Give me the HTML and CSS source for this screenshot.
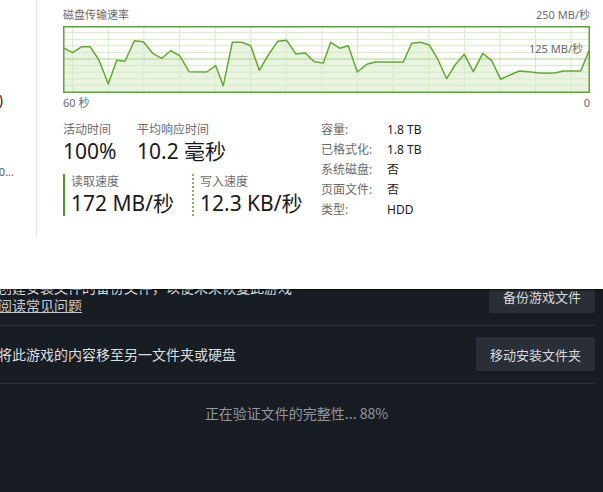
FILE: index.html
```html
<!DOCTYPE html>
<html lang="zh-CN">
<head>
  <meta charset="UTF-8" />
  <title>磁盘 - 验证文件</title>
  <link rel="stylesheet" href="styles.css">
</head>
<body>
  <!-- Task Manager: disk panel -->
  <div class="taskmgr">
    <div class="side">
      <div class="side-frag frag-name">磁盘 1 (D:)</div>
      <div class="side-frag frag-model">ST2000DM00...</div>
    </div>

    <div class="perf">
      <div class="chart-head">
        <span>磁盘传输速率</span>
        <span>250 MB/秒</span>
      </div>
      <div class="chart">
        <svg width="527" height="67" viewBox="0 0 527 67">
          <polygon fill="#e8f4df" points="0,21.7 9.7,26.7 18.7,20.7 27,20.7 36,34 45.3,58 53.7,34.3 62,35.3 71.3,14.7 80.3,15.7 89.7,27.3 98.7,32.3 107.7,24.7 117,30 126,45.7 143.7,46 152.7,39.7 160.3,59.7 169.3,16.3 178.7,16.3 187.7,19.7 196.3,44.3 205.3,29 214.7,15.3 223.7,14.3 233,28 242.3,27 251.3,35.7 260.3,37 267.7,16.3 277,22.3 285.3,19.7 294.3,46 303.7,38.3 312.7,36 340.3,36 348.7,17.3 357.7,16.3 366.3,19 374.3,32.3 383.7,52.7 392,39 401.3,28.3 410.3,45.7 419.7,27.3 428.7,34.7 437.7,53.3 447,49 456.3,45 465.3,45.7 474.3,46.7 483.7,47.3 493,46.7 500.3,45 517.7,45 526.3,24 527,67 0,67"/>
          <g stroke="#d5eac6" stroke-width="1">
            <line x1="0" y1="6.6" x2="527" y2="6.6"/>
            <line x1="0" y1="13.2" x2="527" y2="13.2"/>
            <line x1="0" y1="19.8" x2="527" y2="19.8"/>
            <line x1="0" y1="26.4" x2="527" y2="26.4"/>
            <line x1="0" y1="39.6" x2="527" y2="39.6"/>
            <line x1="0" y1="46.2" x2="527" y2="46.2"/>
            <line x1="0" y1="52.8" x2="527" y2="52.8"/>
            <line x1="0" y1="59.4" x2="527" y2="59.4"/>
            <line x1="9.7" y1="0" x2="9.7" y2="67"/>
            <line x1="45.3" y1="0" x2="45.3" y2="67"/>
            <line x1="80.9" y1="0" x2="80.9" y2="67"/>
            <line x1="116.5" y1="0" x2="116.5" y2="67"/>
            <line x1="152.1" y1="0" x2="152.1" y2="67"/>
            <line x1="187.7" y1="0" x2="187.7" y2="67"/>
            <line x1="223.3" y1="0" x2="223.3" y2="67"/>
            <line x1="258.9" y1="0" x2="258.9" y2="67"/>
            <line x1="294.5" y1="0" x2="294.5" y2="67"/>
            <line x1="330.1" y1="0" x2="330.1" y2="67"/>
            <line x1="365.7" y1="0" x2="365.7" y2="67"/>
            <line x1="401.3" y1="0" x2="401.3" y2="67"/>
            <line x1="436.9" y1="0" x2="436.9" y2="67"/>
            <line x1="472.5" y1="0" x2="472.5" y2="67"/>
            <line x1="508.1" y1="0" x2="508.1" y2="67"/>
          </g>
          <line x1="0" y1="33" x2="527" y2="33" stroke="#a9d38b" stroke-width="1"/>
          <polyline fill="none" stroke="#64a832" stroke-width="1.5" stroke-linejoin="round" points="0,21.7 9.7,26.7 18.7,20.7 27,20.7 36,34 45.3,58 53.7,34.3 62,35.3 71.3,14.7 80.3,15.7 89.7,27.3 98.7,32.3 107.7,24.7 117,30 126,45.7 143.7,46 152.7,39.7 160.3,59.7 169.3,16.3 178.7,16.3 187.7,19.7 196.3,44.3 205.3,29 214.7,15.3 223.7,14.3 233,28 242.3,27 251.3,35.7 260.3,37 267.7,16.3 277,22.3 285.3,19.7 294.3,46 303.7,38.3 312.7,36 340.3,36 348.7,17.3 357.7,16.3 366.3,19 374.3,32.3 383.7,52.7 392,39 401.3,28.3 410.3,45.7 419.7,27.3 428.7,34.7 437.7,53.3 447,49 456.3,45 465.3,45.7 474.3,46.7 483.7,47.3 493,46.7 500.3,45 517.7,45 526.3,24"/>
          <rect x="0.75" y="0.75" width="525.5" height="65.5" fill="none" stroke="#5da42a" stroke-width="1.5"/>
        </svg>
        <span class="chart-mid">125 MB/秒</span>
      </div>
      <div class="chart-foot">
        <span>60 秒</span>
        <span>0</span>
      </div>

      <div class="stats">
        <div class="stats-left">
          <div class="stat-row">
            <div class="stat">
              <div class="stat-label">活动时间</div>
              <div class="stat-value">100%</div>
            </div>
            <div class="stat">
              <div class="stat-label">平均响应时间</div>
              <div class="stat-value">10.2 毫秒</div>
            </div>
          </div>
          <div class="stat-row speeds">
            <div class="stat speed read">
              <div class="stat-label">读取速度</div>
              <div class="stat-value">172 MB/秒</div>
            </div>
            <div class="stat speed write">
              <div class="stat-label">写入速度</div>
              <div class="stat-value">12.3 KB/秒</div>
            </div>
          </div>
        </div>

        <dl class="info">
          <dt>容量:</dt><dd>1.8 TB</dd>
          <dt>已格式化:</dt><dd>1.8 TB</dd>
          <dt>系统磁盘:</dt><dd>否</dd>
          <dt>页面文件:</dt><dd>否</dd>
          <dt>类型:</dt><dd>HDD</dd>
        </dl>
      </div>
    </div>
  </div>

  <!-- Steam: game properties, installed files -->
  <div class="steam">
    <div class="steam-row backup-row">
      <div class="row-text">
        创建安装文件的备份文件，以便未来恢复此游戏<br>
        <a href="#">阅读常见问题</a>
      </div>
      <button class="btn">备份游戏文件</button>
    </div>
    <div class="steam-row move-row">
      <div class="row-text">将此游戏的内容移至另一文件夹或硬盘</div>
      <button class="btn">移动安装文件夹</button>
    </div>
    <div class="verify">正在验证文件的完整性... 88%</div>
  </div>
</body>
</html>
```

FILE: styles.css
```css
* {
  box-sizing: border-box;
}

body {
  margin: 0;
  width: 603px;
  height: 492px;
  overflow: hidden;
  background-color: #181c23;
  font-family: "Noto Sans", "Noto Sans CJK SC", sans-serif;
}

/* task manager window */
.taskmgr {
  position: relative;
  z-index: 1;
  display: flex;
  height: 289px;
  background-color: #fff;
  color: #1a1a1a;
  box-shadow: 0 1px 2px rgba(0, 0, 0, 0.7);
}

.side {
  flex-shrink: 0;
  width: 37px;
  height: 237px;
  border-right: 1px solid #e3e3e3;
}

.side-frag {
  display: flex;
  justify-content: flex-end;  /* only the tail of the text shows */
  overflow: hidden;
  white-space: nowrap;
}

.frag-name {
  width: 3px;
  margin-top: 91px;
  font-size: 14px;
  line-height: 18px;
}

.frag-model {
  width: 14px;
  margin-top: 56px;
  font-size: 11px;
  line-height: 14px;
  color: #555;
}

.perf {
  width: 553px;
  padding: 8px 0 0 26px;
}

.chart-head,
.chart-foot {
  display: flex;
  justify-content: space-between;
  width: 527px;
  font-size: 11px;
  line-height: 14px;
  color: #6b6b6b;
}

.chart {
  position: relative;
  height: 67px;
  margin-top: 4px;
}

.chart svg {
  display: block;
}

.chart-mid {
  position: absolute;
  top: 16px;
  right: 7px;
  font-size: 11px;
  line-height: 14px;
  color: #6b6b6b;
}

.chart-foot {
  margin-top: 3px;
}

.stats {
  display: flex;
  margin-top: 10px;
}

.stats-left {
  width: 258px;
}

.stat-row {
  display: flex;
}

.stat {
  width: 74px;
}

.stat-label {
  font-size: 12px;
  line-height: 20px;
  color: #6b6b6b;
  white-space: nowrap;
}

.stat-value {
  font-size: 21px;
  line-height: 22px;
  white-space: nowrap;
}

.speeds {
  margin-top: 12px;
}

.speed {
  width: 132px;
  padding-left: 6px;
  border-left: 2px solid #4f9a23;
}

.speed.write {
  border-left: 2px dotted #7fc241;
}

.speed .stat-label {
  line-height: 16px;
}

.speed .stat-value {
  line-height: 26px;
}

.info {
  display: grid;
  grid-template-columns: 66px auto;
  margin: 0;
  font-size: 12px;
  line-height: 20px;
}

.info dt {
  color: #6b6b6b;
}

.info dd {
  margin: 0;
  color: #1a1a1a;
}

/* steam window */
.steam {
  height: 203px;
  overflow: hidden;
  margin-left: -2px;
  padding-right: 8px;
  color: #dcdedf;
  font-family: "Noto Sans CJK SC", sans-serif;
  font-size: 14px;
}

.steam-row {
  display: flex;
  align-items: center;
  justify-content: space-between;
  border-bottom: 1px solid #2c3139;
}

.backup-row {
  margin-top: -11px;
  padding-bottom: 11px;
}

.move-row {
  padding: 11px 0 12px;
}

.row-text {
  line-height: 18px;
}

.row-text a {
  color: #c5c9ce;
  text-decoration: underline;
}

.btn {
  height: 34px;
  padding: 0 14px;
  border: none;
  border-radius: 2px;
  background-color: #2a2f37;
  color: #d8dadc;
  font-family: inherit;
  font-size: 13px;
}

.verify {
  padding-top: 20px;
  text-align: center;
  font-size: 14px;
  line-height: 18px;
  color: #8f96a0;
}
```
